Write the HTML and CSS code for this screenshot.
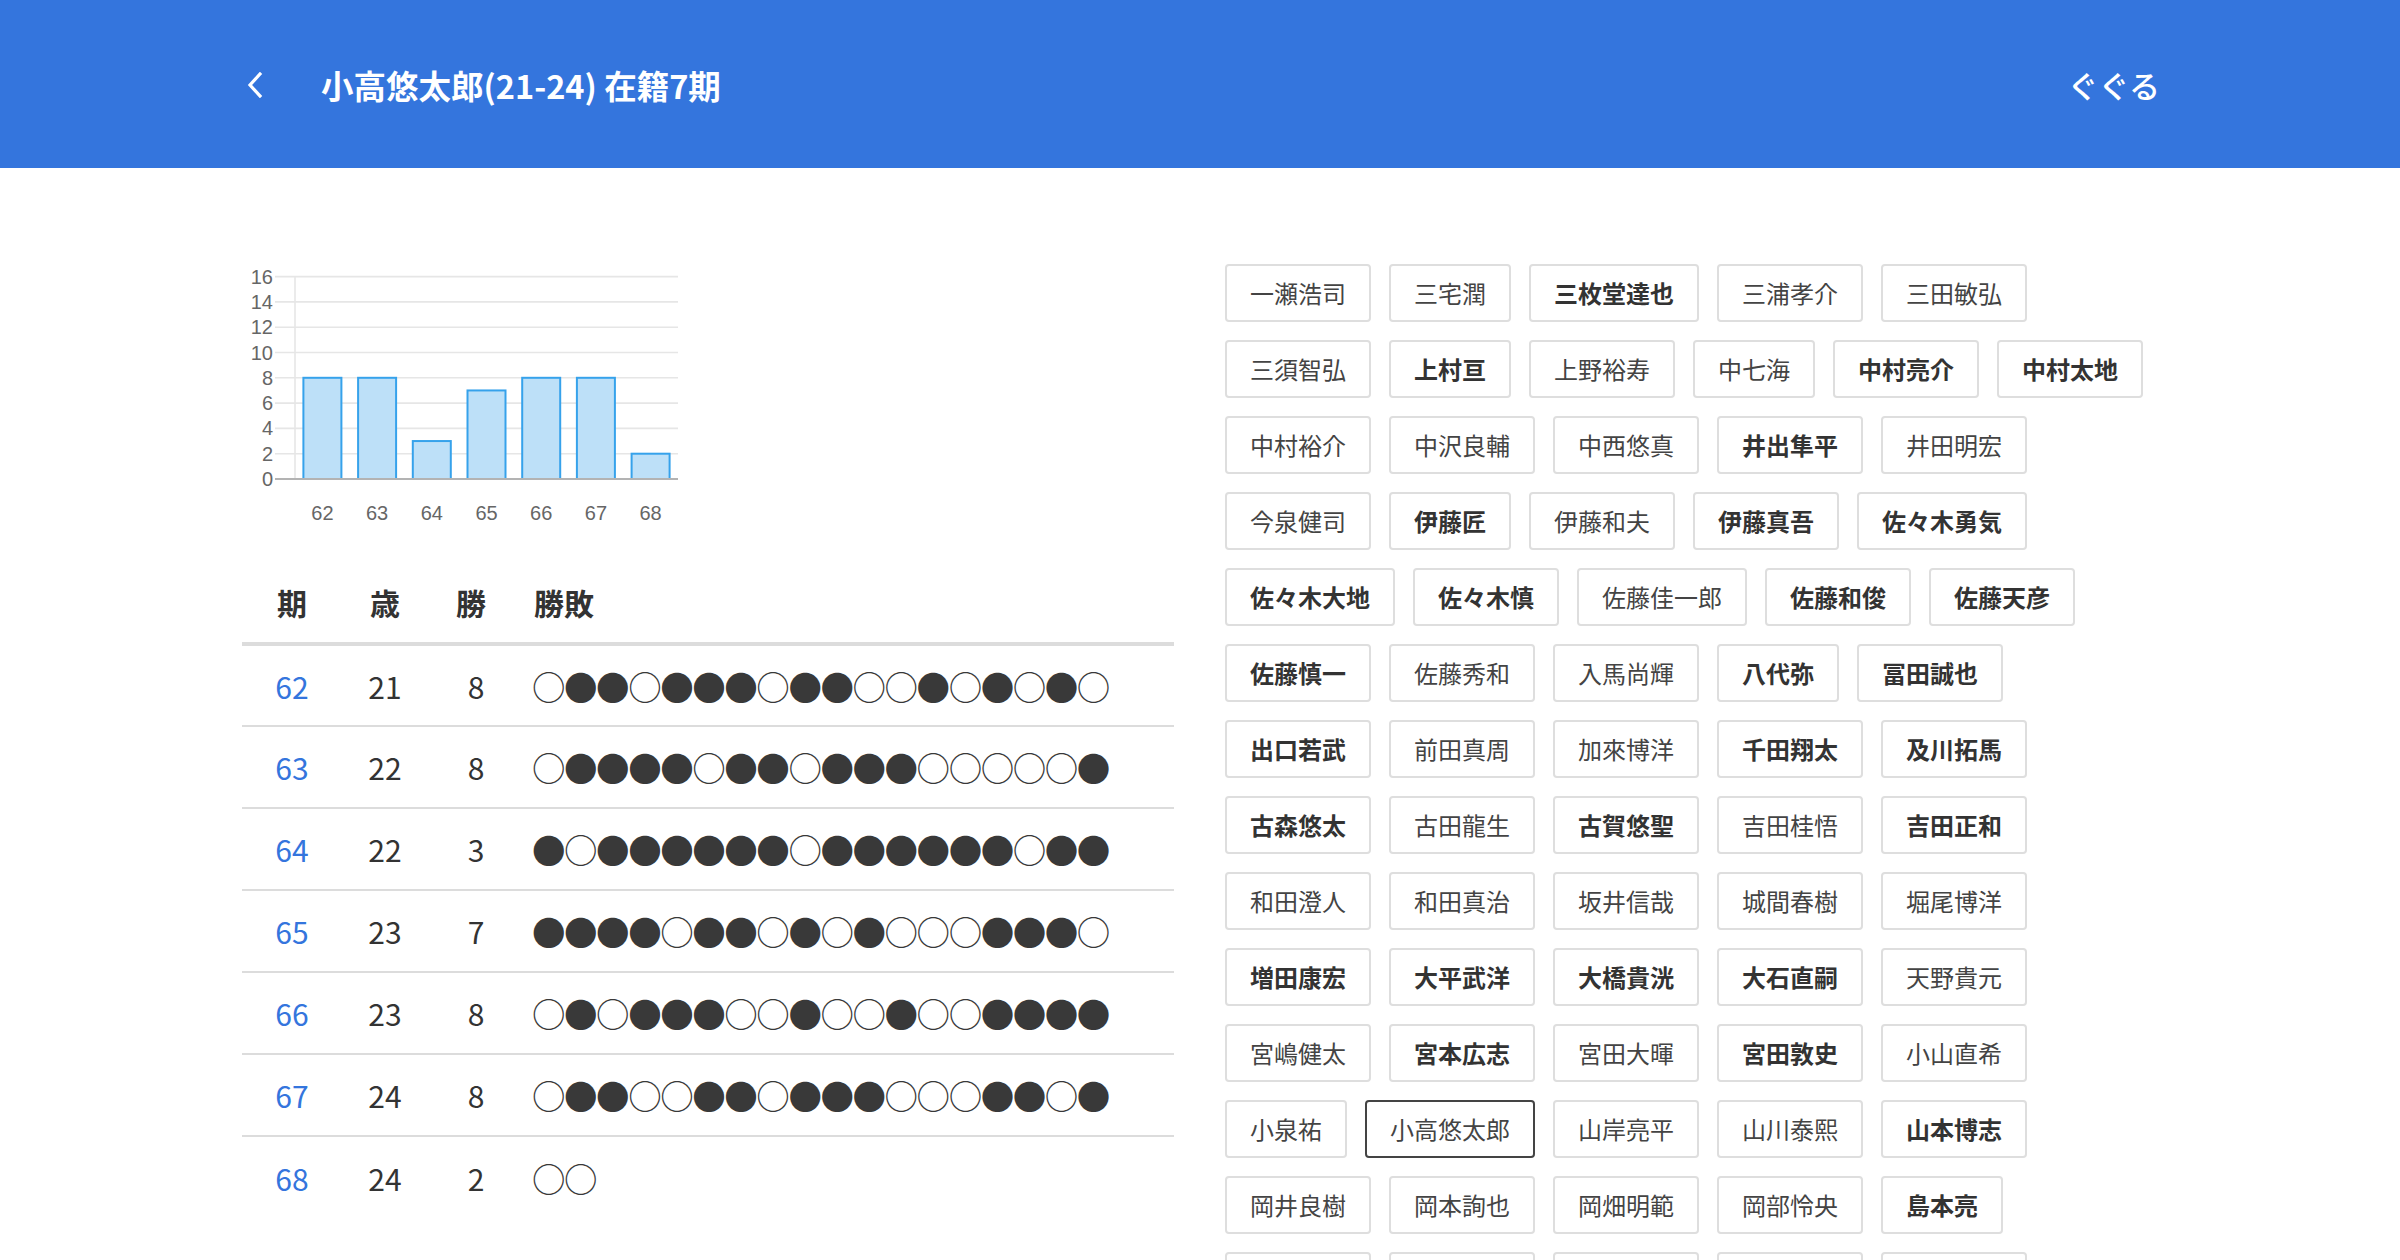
FILE: index.html
```html
<!DOCTYPE html>
<html lang="ja">
<head>
<meta charset="utf-8">
<title>小高悠太郎(21-24) 在籍7期</title>
<link rel="stylesheet" href="styles.css">
</head>
<body>
<header class="topbar">
  <div class="topbar-left">
    <a class="back" href="#" aria-label="戻る">
      <svg width="16" height="26" viewBox="0 0 16 26"><path d="M13 2 L3 13 L13 24" fill="none" stroke="#fff" stroke-width="3.2" stroke-linecap="square"/></svg>
    </a>
    <h1 class="title">小高悠太郎(21-24) 在籍7期</h1>
  </div>
  <a class="gugu" href="#">ぐぐる</a>
</header>

<main class="main">
  <section class="left">
    <svg class="chart" width="440" height="280" viewBox="0 0 440 280">
      <g stroke="#e6e6e6" stroke-width="1.6">
        <line x1="33" y1="18.6" x2="436" y2="18.6"/>
        <line x1="33" y1="43.9" x2="436" y2="43.9"/>
        <line x1="33" y1="69.2" x2="436" y2="69.2"/>
        <line x1="33" y1="94.5" x2="436" y2="94.5"/>
        <line x1="33" y1="119.8" x2="436" y2="119.8"/>
        <line x1="33" y1="145.1" x2="436" y2="145.1"/>
        <line x1="33" y1="170.4" x2="436" y2="170.4"/>
        <line x1="33" y1="195.7" x2="436" y2="195.7"/>
        <line x1="53" y1="18.6" x2="53" y2="221"/>
      </g>
      <g class="ylab" text-anchor="end">
        <text x="31" y="26">16</text>
        <text x="31" y="51">14</text>
        <text x="31" y="76">12</text>
        <text x="31" y="102">10</text>
        <text x="31" y="127">8</text>
        <text x="31" y="152">6</text>
        <text x="31" y="177">4</text>
        <text x="31" y="203">2</text>
        <text x="31" y="228">0</text>
      </g>
      <g fill="#bde0f8" stroke="#36a2eb" stroke-width="2">
        <rect x="61.4" y="119.8" width="38" height="101.2"/>
        <rect x="116.1" y="119.8" width="38" height="101.2"/>
        <rect x="170.8" y="183.05" width="38" height="37.95"/>
        <rect x="225.5" y="132.45" width="38" height="88.55"/>
        <rect x="280.2" y="119.8" width="38" height="101.2"/>
        <rect x="334.9" y="119.8" width="38" height="101.2"/>
        <rect x="389.6" y="195.7" width="38" height="25.3"/>
      </g>
      <line x1="33" y1="221" x2="436" y2="221" stroke="#b3b3b3" stroke-width="2"/>
      <g class="xlab" text-anchor="middle">
        <text x="80.4" y="262">62</text>
        <text x="135.1" y="262">63</text>
        <text x="189.8" y="262">64</text>
        <text x="244.5" y="262">65</text>
        <text x="299.2" y="262">66</text>
        <text x="353.9" y="262">67</text>
        <text x="408.6" y="262">68</text>
      </g>
    </svg>

    <table class="record">
      <colgroup>
        <col class="w-ki"><col class="w-age"><col class="w-win"><col>
      </colgroup>
      <thead>
        <tr><th class="c-ki">期</th><th class="c-age">歳</th><th class="c-win">勝</th><th class="c-res">勝敗</th></tr>
      </thead>
      <tbody>
        <tr><td class="c-ki"><a href="#">62</a></td><td class="c-age">21</td><td class="c-win">8</td><td class="c-res">○●●○●●●○●●○○●○●○●○</td></tr>
        <tr><td class="c-ki"><a href="#">63</a></td><td class="c-age">22</td><td class="c-win">8</td><td class="c-res">○●●●●○●●○●●●○○○○○●</td></tr>
        <tr><td class="c-ki"><a href="#">64</a></td><td class="c-age">22</td><td class="c-win">3</td><td class="c-res">●○●●●●●●○●●●●●●○●●</td></tr>
        <tr><td class="c-ki"><a href="#">65</a></td><td class="c-age">23</td><td class="c-win">7</td><td class="c-res">●●●●○●●○●○●○○○●●●○</td></tr>
        <tr><td class="c-ki"><a href="#">66</a></td><td class="c-age">23</td><td class="c-win">8</td><td class="c-res">○●○●●●○○●○○●○○●●●●</td></tr>
        <tr><td class="c-ki"><a href="#">67</a></td><td class="c-age">24</td><td class="c-win">8</td><td class="c-res">○●●○○●●○●●●○○○●●○●</td></tr>
        <tr><td class="c-ki"><a href="#">68</a></td><td class="c-age">24</td><td class="c-win">2</td><td class="c-res">○○</td></tr>
      </tbody>
    </table>
  </section>

  <section class="right">
    <div class="tags">
      <a class="tag" href="#">一瀬浩司</a>
      <a class="tag" href="#">三宅潤</a>
      <a class="tag b" href="#">三枚堂達也</a>
      <a class="tag" href="#">三浦孝介</a>
      <a class="tag" href="#">三田敏弘</a>
      <a class="tag" href="#">三須智弘</a>
      <a class="tag b" href="#">上村亘</a>
      <a class="tag" href="#">上野裕寿</a>
      <a class="tag" href="#">中七海</a>
      <a class="tag b" href="#">中村亮介</a>
      <a class="tag b" href="#">中村太地</a>
      <a class="tag" href="#">中村裕介</a>
      <a class="tag" href="#">中沢良輔</a>
      <a class="tag" href="#">中西悠真</a>
      <a class="tag b" href="#">井出隼平</a>
      <a class="tag" href="#">井田明宏</a>
      <a class="tag" href="#">今泉健司</a>
      <a class="tag b" href="#">伊藤匠</a>
      <a class="tag" href="#">伊藤和夫</a>
      <a class="tag b" href="#">伊藤真吾</a>
      <a class="tag b" href="#">佐々木勇気</a>
      <a class="tag b" href="#">佐々木大地</a>
      <a class="tag b" href="#">佐々木慎</a>
      <a class="tag" href="#">佐藤佳一郎</a>
      <a class="tag b" href="#">佐藤和俊</a>
      <a class="tag b" href="#">佐藤天彦</a>
      <a class="tag b" href="#">佐藤慎一</a>
      <a class="tag" href="#">佐藤秀和</a>
      <a class="tag" href="#">入馬尚輝</a>
      <a class="tag b" href="#">八代弥</a>
      <a class="tag b" href="#">冨田誠也</a>
      <a class="tag b" href="#">出口若武</a>
      <a class="tag" href="#">前田真周</a>
      <a class="tag" href="#">加來博洋</a>
      <a class="tag b" href="#">千田翔太</a>
      <a class="tag b" href="#">及川拓馬</a>
      <a class="tag b" href="#">古森悠太</a>
      <a class="tag" href="#">古田龍生</a>
      <a class="tag b" href="#">古賀悠聖</a>
      <a class="tag" href="#">吉田桂悟</a>
      <a class="tag b" href="#">吉田正和</a>
      <a class="tag" href="#">和田澄人</a>
      <a class="tag" href="#">和田真治</a>
      <a class="tag" href="#">坂井信哉</a>
      <a class="tag" href="#">城間春樹</a>
      <a class="tag" href="#">堀尾博洋</a>
      <a class="tag b" href="#">増田康宏</a>
      <a class="tag b" href="#">大平武洋</a>
      <a class="tag b" href="#">大橋貴洸</a>
      <a class="tag b" href="#">大石直嗣</a>
      <a class="tag" href="#">天野貴元</a>
      <a class="tag" href="#">宮嶋健太</a>
      <a class="tag b" href="#">宮本広志</a>
      <a class="tag" href="#">宮田大暉</a>
      <a class="tag b" href="#">宮田敦史</a>
      <a class="tag" href="#">小山直希</a>
      <a class="tag" href="#">小泉祐</a>
      <a class="tag current" href="#">小高悠太郎</a>
      <a class="tag" href="#">山岸亮平</a>
      <a class="tag" href="#">山川泰熙</a>
      <a class="tag b" href="#">山本博志</a>
      <a class="tag" href="#">岡井良樹</a>
      <a class="tag" href="#">岡本詢也</a>
      <a class="tag" href="#">岡畑明範</a>
      <a class="tag" href="#">岡部怜央</a>
      <a class="tag b" href="#">島本亮</a>
      <a class="tag" href="#">川上大貴</a>
      <a class="tag" href="#">広瀬章人</a>
      <a class="tag" href="#">建部和輝</a>
      <a class="tag" href="#">徳田拳士</a>
      <a class="tag" href="#">折田翔吾</a>
    </div>
  </section>
</main>
</body>
</html>
```

FILE: styles.css
```css
html, body {
  margin: 0;
  padding: 0;
  background: #fff;
}

body {
  font-family: "Noto Sans CJK JP", "Noto Sans", sans-serif;
  color: #333;
}

a {
  text-decoration: none;
  color: inherit;
}

.topbar {
  height: 168px;
  background: #3475dd;
  display: flex;
  align-items: center;
  justify-content: space-between;
  padding: 0 240px 0 247px;
  box-sizing: border-box;
  color: #fff;
}

.topbar-left {
  display: flex;
  align-items: center;
}

.back {
  display: flex;
  align-items: center;
  margin-right: 58px;
  margin-top: 2px;
}

.title {
  margin: 0;
  font-size: 32.5px;
  font-weight: 700;
  color: #fff;
}

.gugu {
  font-size: 31px;
  font-weight: 500;
  color: #fff;
}

.main {
  display: grid;
  grid-template-columns: 932px 935px;
  column-gap: 51px;
  padding: 90px 0 0 242px;
}

.chart {
  display: block;
  font-family: "Liberation Sans", Arial, sans-serif;
}

.ylab text,
.xlab text {
  font-size: 20px;
  fill: #666;
}

.record {
  width: 932px;
  table-layout: fixed;
  border-collapse: collapse;
  margin-top: 24px;
  font-size: 30px;
}

.w-ki { width: 100px; }
.w-age { width: 86px; }
.w-win { width: 96px; }

.record th,
.record td {
  box-sizing: border-box;
  padding: 0;
}

.record th {
  height: 82px;
  font-weight: 700;
  color: #333;
  border-bottom: 4px solid #dcdcdc;
}

.record td {
  height: 82px;
  color: #333;
  border-bottom: 2px solid #dcdcdc;
}

.record tbody tr:last-child td {
  border-bottom: none;
}

.c-ki,
.c-age,
.c-win {
  text-align: center;
}

.c-ki a {
  color: #3475dd;
}

.record th.c-win {
  padding-right: 10px;
}

.c-res {
  text-align: left;
}

.record th.c-res {
  padding-left: 10px;
}

.record td.c-res {
  padding-left: 8px;
  font-size: 33.5px;
  line-height: 1;
  letter-spacing: -1.45px;
  white-space: nowrap;
  color: #393939;
}

.tags {
  display: flex;
  flex-wrap: wrap;
  gap: 18px 18px;
  padding-top: 6px;
}

.tag {
  display: block;
  height: 58px;
  box-sizing: border-box;
  border: 2px solid #dedede;
  border-radius: 4px;
  padding: 0 23px;
  font-size: 24px;
  line-height: 54px;
  color: #444;
  white-space: nowrap;
}

.tag.b {
  font-weight: 700;
  color: #333;
}

.tag.current {
  border-color: #444;
}
```
